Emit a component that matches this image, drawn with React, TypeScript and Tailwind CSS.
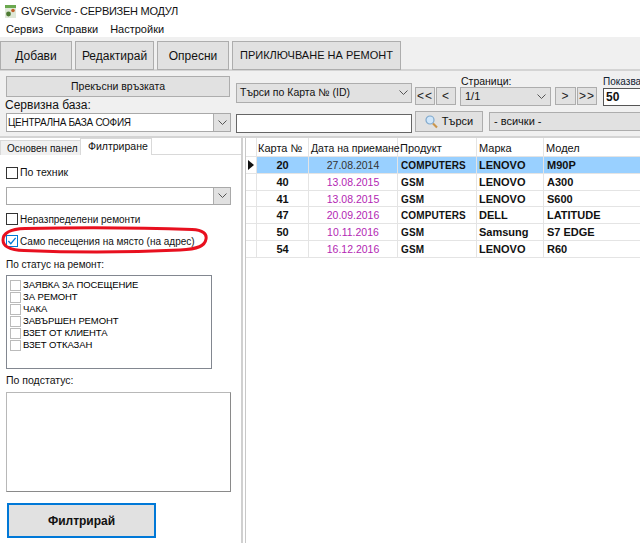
const rows = [
  ["20", "27.08.2014", "COMPUTERS", "LENOVO", "M90P"],
  ["40", "13.08.2015", "GSM", "LENOVO", "A300"],
  ["41", "13.08.2015", "GSM", "LENOVO", "S600"],
  ["47", "20.09.2016", "COMPUTERS", "DELL", "LATITUDE"],
  ["50", "10.11.2016", "GSM", "Samsung", "S7 EDGE"],
  ["54", "16.12.2016", "GSM", "LENOVO", "R60"],
];

const statuses = ["ЗАЯВКА ЗА ПОСЕЩЕНИЕ", "ЗА РЕМОНТ", "ЧАКА", "ЗАВЪРШЕН РЕМОНТ", "ВЗЕТ ОТ КЛИЕНТА", "ВЗЕТ ОТКАЗАН"];

function Chevron() {
  return (
    <svg width="9" height="6" viewBox="0 0 9 6" className="shrink-0">
      <path d="M0.5 0.5 L4.5 4.5 L8.5 0.5" fill="none" stroke="#555" strokeWidth="1" />
    </svg>
  );
}

function ToolButton({ label, w, size }: { label: string; w: string; size: string }) {
  return (
    <div className={`${w} ${size} h-[29px] bg-[#e1e1e1] border border-[#adadad] flex items-center justify-center whitespace-nowrap text-[#111]`}>
      {label}
    </div>
  );
}

function NavButton({ label, w }: { label: string; w: string }) {
  return (
    <div className={`${w} h-[18px] bg-[#e1e1e1] border border-[#adadad] flex items-center justify-center text-[12px] text-[#222] tracking-[1px]`}>
      {label}
    </div>
  );
}

function WhiteCombo({ value, h }: { value: string; h: string }) {
  return (
    <div className={`w-[225px] ${h} bg-white border border-[#a9a9a9] flex items-center justify-between text-[10px] tracking-[-0.3px] pl-[1px] text-[#111]`}>
      <span>{value}</span>
      <div className="w-[17px] h-full bg-[#e1e1e1] border-l border-[#adadad] flex items-center justify-center">
        <Chevron />
      </div>
    </div>
  );
}

function Check({ checked }: { checked?: boolean }) {
  return (
    <div className={`w-[12px] h-[12px] bg-white border ${checked ? "border-[#0078d7]" : "border-[#333]"} shrink-0 flex items-center justify-center`}>
      {checked && (
        <svg width="10" height="10" viewBox="0 0 11 11">
          <path d="M1.5 5.5 L4.2 8.5 L9.5 2" fill="none" stroke="#0078d7" strokeWidth="1.4" />
        </svg>
      )}
    </div>
  );
}

export default function App() {
  return (
    <div className="w-[640px] h-[543px] overflow-hidden bg-white relative font-['Liberation_Sans',sans-serif] text-[#111]">
      {/* title + menu */}
      <div className="h-[21px] flex items-center pl-[5px] gap-[5px] text-[11px] tracking-[-0.27px] pt-[2px]">
        <svg width="11" height="13" viewBox="0 0 11 13">
          <rect x="0" y="0" width="11" height="3" fill="#6aa84f" />
          <rect x="0" y="3" width="11" height="10" fill="#dfe8d8" />
          <circle cx="3.5" cy="9" r="2.4" fill="#4d7a32" />
          <circle cx="8" cy="5.5" r="1.8" fill="#c0602a" />
        </svg>
        <span>GVService - СЕРВИЗЕН МОДУЛ</span>
      </div>
      <div className="h-[16px] flex items-center pl-[6px] gap-[12px] text-[11px]">
        <span>Сервиз</span>
        <span>Справки</span>
        <span>Настройки</span>
      </div>

      {/* toolbar */}
      <div className="h-[34px] bg-[#f0f0f0] pt-[4px] flex gap-[3px] border-b-2 border-[#d4d4d4]">
        <ToolButton label="Добави" w="w-[72px]" size="text-[12px]" />
        <ToolButton label="Редактирай" w="w-[79px]" size="text-[12px]" />
        <ToolButton label="Опресни" w="w-[72px]" size="text-[12px]" />
        <ToolButton label="ПРИКЛЮЧВАНЕ НА РЕМОНТ" w="w-[169px]" size="text-[11px]" />
      </div>

      {/* search panel */}
      <div className="h-[67px] bg-[#f0f0f0] border-b-2 border-[#d4d4d4] flex overflow-hidden">
        <div className="w-[236px] pl-[6px] pt-[5px] shrink-0">
          <div className="w-[224px] h-[21px] bg-[#e1e1e1] border border-[#adadad] flex items-center justify-center text-[10.5px]">
            Прекъсни връзката
          </div>
          <div className="text-[12px] leading-[15px] mt-[1px] -ml-[1px]">Сервизна база:</div>
          <WhiteCombo value="ЦЕНТРАЛНА БАЗА СОФИЯ" h="h-[19px]" />
        </div>
        <div className="w-[179px] pt-[12px] shrink-0">
          <div className="w-[176px] h-[20px] bg-[#e1e1e1] border border-[#adadad] flex items-center justify-between px-[3px] text-[10.5px]">
            <span>Търси по Карта № (ID)</span>
            <Chevron />
          </div>
          <div className="w-[176px] h-[19px] mt-[11px] bg-white border border-[#666]" />
        </div>
        <div className="shrink-0">
          <div className="flex h-[38px]">
            <div className="flex gap-[1px] pt-[16px] w-[45px]">
              <NavButton label="<<" w="w-[20px]" />
              <NavButton label="<" w="w-[20px]" />
            </div>
            <div className="w-[95px]">
              <div className="text-[10.5px] leading-[11px] pt-[5px] pl-[1px]">Страници:</div>
              <div className="w-[91px] h-[19px] bg-[#e1e1e1] border border-[#adadad] flex items-center justify-between px-[4px] text-[11px]">
                <span>1/1</span>
                <Chevron />
              </div>
            </div>
            <div className="flex gap-[1px] pt-[16px] w-[48px]">
              <NavButton label=">" w="w-[21px]" />
              <NavButton label=">>" w="w-[20px]" />
            </div>
            <div className="w-[40px] shrink-0">
              <div className="text-[10px] leading-[11px] pt-[5px] whitespace-nowrap text-[#123]">Показва</div>
              <div className="w-[60px] h-[18px] mt-[1px] bg-white border border-[#555] text-[12px] font-bold pl-[2px] leading-[16px]">50</div>
            </div>
          </div>
          <div className="flex mt-[2px] w-[300px]">
            <div className="w-[68px] h-[21px] bg-[#e1e1e1] border border-[#adadad] flex items-center justify-center gap-[4px] text-[11px]">
              <svg width="13" height="14" viewBox="0 0 13 14">
                <circle cx="5" cy="5" r="4" fill="#cfe6fa" stroke="#7fa8cc" strokeWidth="1.2" />
                <path d="M8 8.5 L12 12.5" stroke="#c9954c" strokeWidth="2.2" />
              </svg>
              <span>Търси</span>
            </div>
            <div className="w-[180px] h-[19px] mt-[1px] ml-[6px] bg-[#e1e1e1] border border-[#adadad] flex items-center px-[4px] text-[11px]">
              - всички -
            </div>
          </div>
        </div>
      </div>

      {/* main */}
      <div className="flex h-[405px] bg-white">
        <div className="w-[243px] shrink-0 border-r-2 border-[#d0d0d0]">
          <div className="flex h-[17px] items-end bg-white">
            <div className="w-[81px] h-[15px] bg-[#f0f0f0] border border-b-0 border-[#d9d9d9] text-[10px] leading-[15px] pl-[6px] whitespace-nowrap">Основен панел</div>
            <div className="w-[72px] h-[17px] bg-white border border-b-0 border-[#d9d9d9] text-[10.5px] leading-[15px] pl-[7px] -ml-px whitespace-nowrap">Филтриране</div>
            <div className="flex-1 border-b border-[#d9d9d9]" />
          </div>
          <div className="px-[6px]">
            <div className="flex items-center gap-[2px] mt-[11px] h-[14px] text-[10.5px]">
              <Check />
              <span>По техник</span>
            </div>
            <div className="mt-[7px]">
              <WhiteCombo value="" h="h-[18px]" />
            </div>
            <div className="flex items-center gap-[2px] mt-[7px] h-[14px] text-[10px]">
              <Check />
              <span>Неразпределени ремонти</span>
            </div>
            <div className="flex items-center gap-[2px] mt-[8px] h-[14px] text-[10px]">
              <Check checked />
              <span>Само песещения на място (на адрес)</span>
            </div>
            <div className="text-[10px] leading-[13px] mt-[10px]">По статус на ремонт:</div>
            <div className="w-[206px] h-[94px] mt-[4px] bg-white border border-[#828790] pl-[3px] pt-[3px]">
              {statuses.map((s) => (
                <div key={s} className="flex items-center h-[12px] gap-[2px] text-[9.5px] tracking-[-0.1px] text-black">
                  <div className="w-[11px] h-[11px] border border-[#bbb] bg-white shrink-0" />
                  <span>{s}</span>
                </div>
              ))}
            </div>
            <div className="text-[10.5px] leading-[13px] mt-[5px]">По подстатус:</div>
            <div className="w-[225px] h-[100px] mt-[5px] bg-white border border-[#8a8a8a] border-l-[#b8b8b8] border-t-[#b8b8b8]" />
            <div className="w-[149px] h-[35px] mt-[11px] ml-[1px] bg-[#e1e1e1] border-2 border-[#0078d7] flex items-center justify-center text-[12px] font-bold">
              Филтрирай
            </div>
          </div>
        </div>

        {/* grid */}
        <div className="flex-1 ml-[2px] border-l border-[#c8c8c8] text-[11px]">
          <div className="flex h-[19px] items-center border-b border-[#e4e4e4]">
            <div className="w-[11px] h-full border-r border-[#e4e4e4]" />
            <div className="w-[52px] h-full pl-[1px] border-r border-[#e4e4e4] leading-[20px]">Карта №</div>
            <div className="w-[89px] h-full pl-[2px] border-r border-[#e4e4e4] leading-[20px] whitespace-nowrap text-[10.5px]">Дата на приемане</div>
            <div className="w-[79px] h-full pl-[2px] border-r border-[#e4e4e4] leading-[20px]">Продукт</div>
            <div className="w-[67px] h-full pl-[2px] border-r border-[#e4e4e4] leading-[20px]">Марка</div>
            <div className="flex-1 h-full pl-[2px] leading-[20px]">Модел</div>
          </div>
          {rows.map((r, i) => (
            <div key={r[0]} className="flex h-[16.8px] items-center border-b border-[#e4e4e4] font-bold">
              <div className="w-[11px] h-full border-r border-[#e4e4e4] flex items-center justify-center">
                {i === 0 && (
                  <svg width="6" height="10" viewBox="0 0 6 10">
                    <path d="M0 0 L6 5 L0 10 Z" fill="#111" />
                  </svg>
                )}
              </div>
              <div className={`w-[52px] h-full text-center leading-[16px] border-r border-[#e4e4e4] ${i === 0 ? "bg-[#99d0ff]" : ""}`}>{r[0]}</div>
              <div className={`w-[89px] h-full text-center leading-[16px] font-normal text-[10.5px] border-r border-[#e4e4e4] ${i === 0 ? "bg-[#99d0ff] text-[#333]" : "text-[#b31fb3]"}`}>{r[1]}</div>
              <div className={`w-[79px] h-full pl-[3px] leading-[17px] text-[10px] tracking-[0.1px] border-r border-[#e4e4e4] ${i === 0 ? "bg-[#99d0ff]" : ""}`}>{r[2]}</div>
              <div className={`w-[67px] h-full pl-[2px] leading-[16px] border-r border-[#e4e4e4] ${i === 0 ? "bg-[#99d0ff]" : ""}`}>{r[3]}</div>
              <div className={`flex-1 h-full pl-[3px] leading-[16px] ${i === 0 ? "bg-[#99d0ff]" : ""}`}>{r[4]}</div>
            </div>
          ))}
        </div>
      </div>

      {/* red marker drawn over the screenshot */}
      <svg className="absolute left-0 top-[225px]" width="212" height="30" viewBox="0 0 212 30">
        <path
          d="M25 3.5 C80 2.5 150 3 192 4.5 C203 5 207 9 206 14 C205 21 198 24 180 25 C130 27.5 70 27.5 24 25.5 C10 25 3 21 3 15 C3 8 10 4 25 3.5 Z"
          fill="none"
          stroke="#e8101f"
          strokeWidth="3"
        />
      </svg>
    </div>
  );
}
